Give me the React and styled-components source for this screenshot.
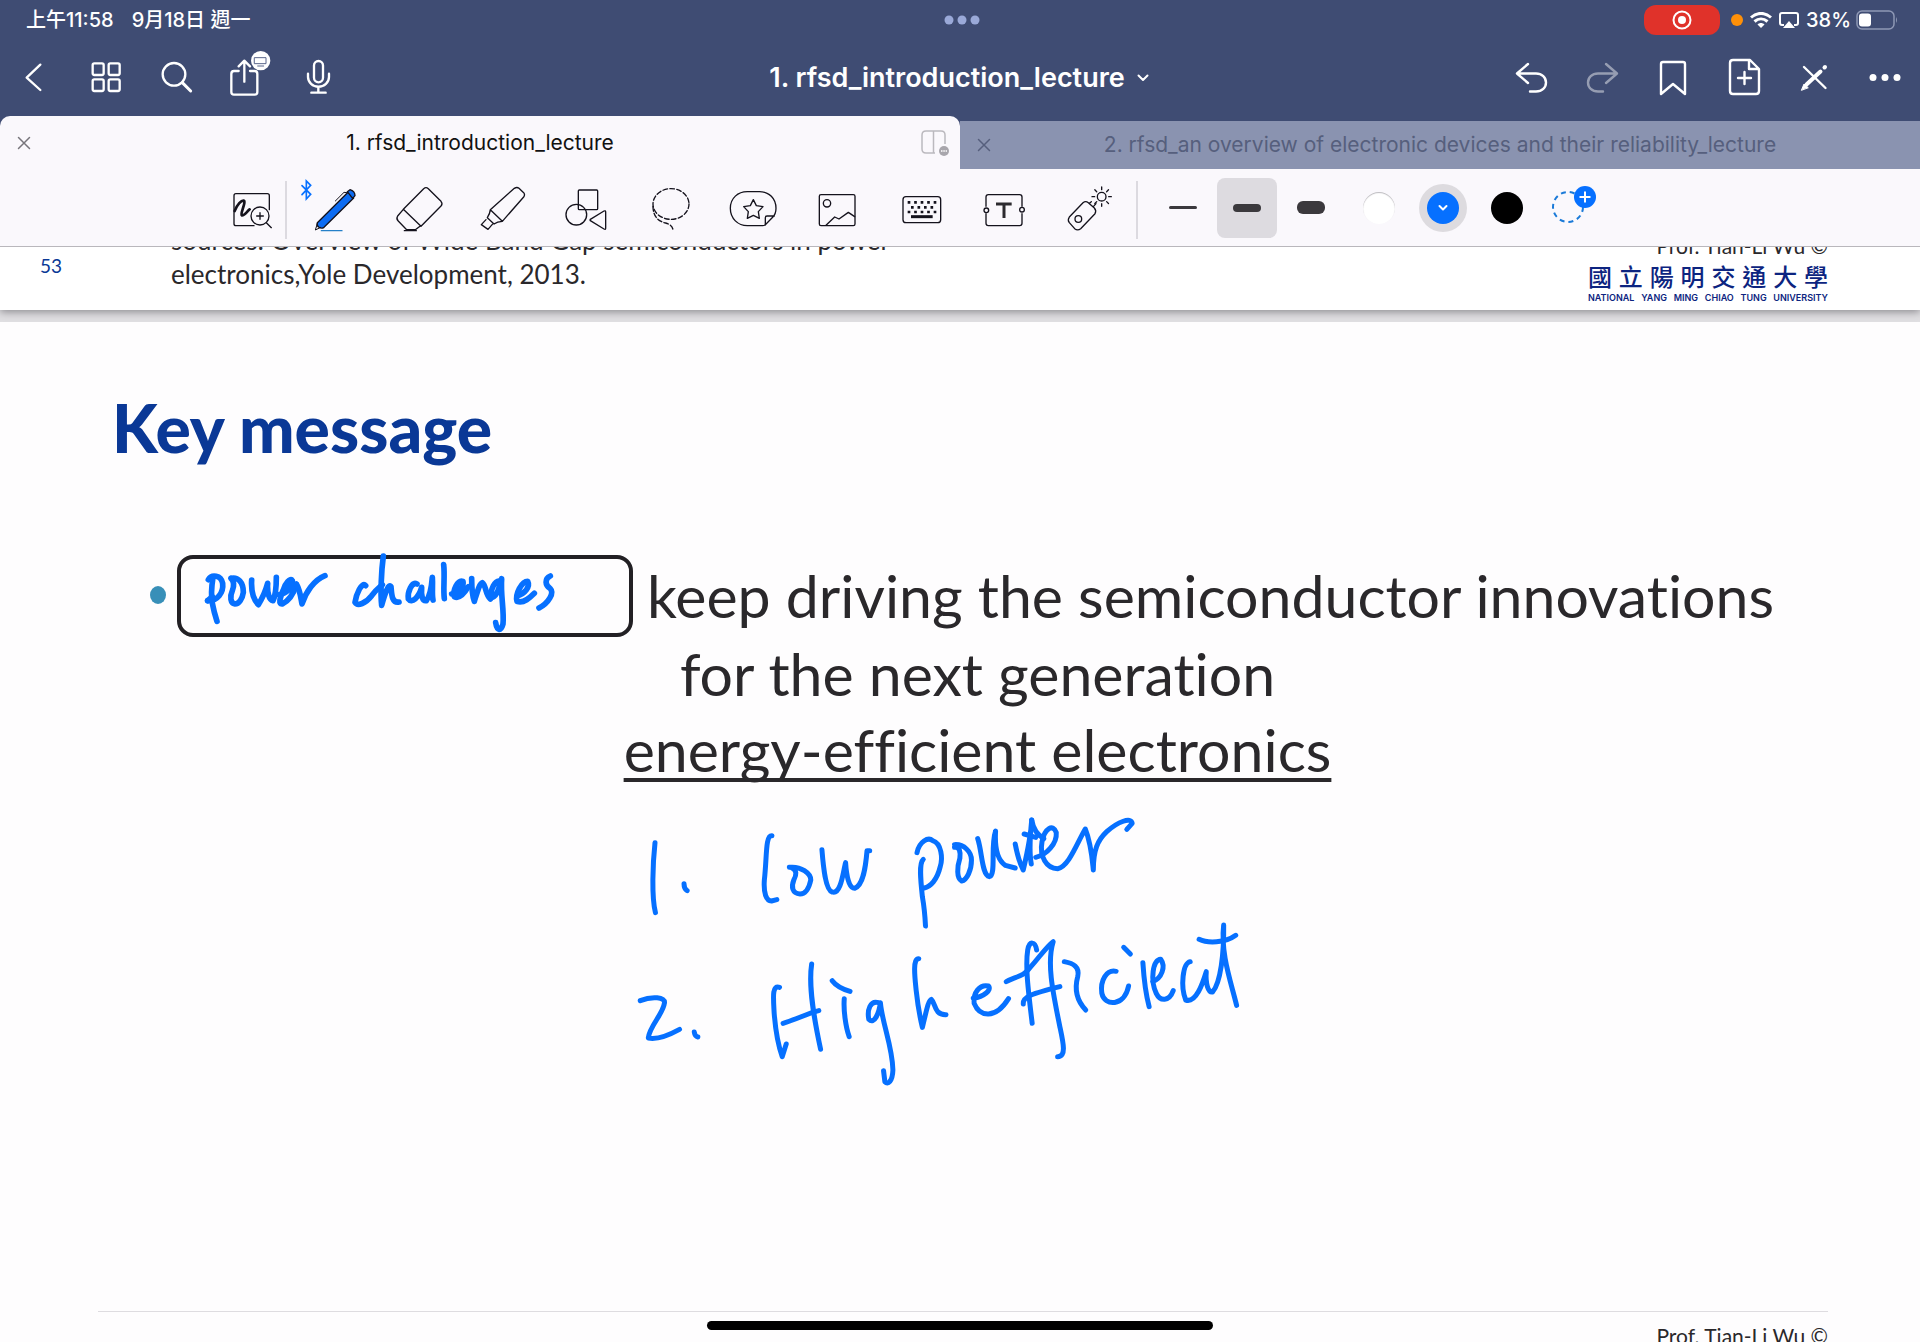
import React from "react";
import styled, { createGlobalStyle, css } from "styled-components";

const uiFont = `Inter, "Noto Sans CJK TC", "Liberation Sans", sans-serif`;
const slideFont = `Lato, "Noto Sans CJK TC", "Open Sans", sans-serif`;

const color = {
  header: "#3f4c73",
  idleTab: "#8a93b0",
  bar: "#faf8fc",
  paper: "#fefdfe",
  ink: "#0670ff",
  slideText: "#2a282b",
  navy: "#0a3896",
};

const GlobalStyle = createGlobalStyle`
  *, *::before, *::after { box-sizing: border-box; }
  body { margin: 0; overflow: hidden; background: ${color.paper}; font-family: ${uiFont}; }
  button { margin: 0; padding: 0; border: 0; background: none; color: inherit; font: inherit; cursor: pointer; }
  h1, h2, p { margin: 0; }
  svg { display: block; }
`;

const Screen = styled.div`
  position: relative;
  display: flex;
  flex-direction: column;
  height: 100vh;
  overflow: hidden;
`;

/* ---------- header ---------- */

const Header = styled.header`
  flex: none;
  background: ${color.header};
  color: #fff;
`;

const StatusBar = styled.div`
  display: grid;
  grid-template-columns: 1fr auto 1fr;
  align-items: center;
  height: 40px;
  padding: 0 22px 0 26px;
  font-size: 20px;
  font-weight: 500;
  line-height: 24px;
`;

const Clock = styled.div`
  display: flex;
  gap: 18px;
`;

const StatusRight = styled.div`
  display: flex;
  align-items: center;
  justify-content: flex-end;
  gap: 5px;
`;

const RecordPill = styled.button`
  display: flex;
  align-items: center;
  justify-content: center;
  width: 76px;
  height: 30px;
  margin-right: 6px;
  border-radius: 12px;
  background: #e0322a;
`;

const MicDot = styled.span`
  width: 12px;
  height: 12px;
  margin-right: 2px;
  border-radius: 50%;
  background: #ff9008;
`;

const NavBar = styled.nav`
  display: grid;
  grid-template-columns: 1fr auto 1fr;
  align-items: center;
  height: 76px;
  padding: 0 2px 0 0;
`;

const NavGroup = styled.div`
  display: flex;
  gap: 5px;
  justify-content: ${(p) => (p.$end ? "flex-end" : "flex-start")};
`;

const NavButton = styled.button`
  display: flex;
  justify-content: center;
  width: 66px;
  height: 54px;
  opacity: ${(p) => (p.disabled ? 0.45 : 1)};
`;

const DocTitle = styled.span`
  font-size: 27px;
  font-weight: 600;
  line-height: 32px;
`;

const TitleButton = styled.button`
  display: flex;
  align-items: center;
  gap: 12px;
`;

const Tabs = styled.div`
  display: grid;
  grid-template-columns: 1fr 1fr;
  align-items: end;
`;

const Tab = styled.div`
  display: grid;
  grid-template-columns: 48px 1fr 48px;
  align-items: center;
  height: 48px;
  background: ${color.idleTab};
  color: #565f7d;
  font-size: 21px;
  line-height: 24px;
  ${(p) =>
    p.$active &&
    css`
      height: 53px;
      border-radius: 10px 10px 0 0;
      background: ${color.bar};
      color: #111;
    `}
`;

const TabLabel = styled.button`
  overflow: hidden;
  text-align: center;
  white-space: nowrap;
`;

const TabIconButton = styled.button`
  display: flex;
  align-items: center;
  justify-content: center;
  height: 32px;
  color: ${(p) => (p.$muted ? "#77757b" : "inherit")};
`;

/* ---------- tool bar ---------- */

const ToolBar = styled.div`
  flex: none;
  display: flex;
  align-items: center;
  height: 78px;
  padding: 0 0 0 219px;
  border-bottom: 1px solid #b9b7bc;
  background: ${color.bar};
  color: #14121c;
`;

const ToolButton = styled.button`
  display: flex;
  justify-content: center;
  width: 66px;
`;

const ToolGroup = styled.div`
  display: grid;
  grid-template-columns: repeat(10, 1fr);
  justify-items: center;
  width: 837px;
  margin: 0 6px;
`;

const Divider = styled.span`
  width: 2px;
  height: 58px;
  margin-top: 4px;
  background: #dcdae0;
`;

const Options = styled.div`
  display: flex;
  gap: 4px;
  margin-left: ${(p) => (p.$tight ? 8 : 15)}px;
`;

const OptionButton = styled.button`
  display: flex;
  align-items: center;
  justify-content: center;
  width: 60px;
  height: 60px;
  border-radius: 8px;
  background: ${(p) => (p.$selected ? "#dddbe0" : "transparent")};
`;

const StrokeSample = styled.span`
  width: 28px;
  height: ${(p) => p.$weight}px;
  border-radius: 6px;
  background: #3b393d;
`;

const Swatch = styled.span`
  display: flex;
  align-items: center;
  justify-content: center;
  width: 32px;
  height: 32px;
  border-radius: 50%;
  background: ${(p) => p.$fill};
  box-shadow: ${(p) => (p.$selected ? "0 0 0 8px #dddbdf" : p.$outlined ? "inset 0 1px 1px #bbb9be" : "none")};
`;

/* ---------- slides ---------- */

const Canvas = styled.main`
  flex: 1;
  display: flex;
  flex-direction: column;
  min-height: 0;
  overflow: hidden;
  background: #e0dfe2;
  font-family: ${slideFont};
  font-variant-ligatures: none;
  color: ${color.slideText};
`;

const PreviousSlide = styled.section`
  flex: none;
  display: flex;
  align-items: flex-end;
  justify-content: space-between;
  height: 63px;
  margin-bottom: 12px;
  padding: 0 92px 0 40px;
  overflow: hidden;
  background: #fff;
  box-shadow: 0 2px 8px #8b8a8f;
`;

const SourceNote = styled.div`
  display: flex;
  align-items: flex-start;
  gap: 108px;
  padding-bottom: 19px;
`;

const PageNumber = styled.span`
  width: 23px;
  padding-top: 28px;
  color: ${color.navy};
  font-size: 19px;
  line-height: 30px;
`;

const Source = styled.p`
  font-size: 26px;
  line-height: 34px;
`;

const Credit = styled.p`
  color: ${color.slideText};
  font-size: 21px;
  line-height: 28px;
  text-align: right;
  white-space: nowrap;
`;

const University = styled.div`
  width: 240px;
  padding-bottom: 6px;
  color: #0c2480;
`;

const UniversityName = styled.p`
  font-family: "Noto Sans CJK TC", sans-serif;
  font-size: 24px;
  font-weight: 500;
  line-height: 32px;
  text-align-last: justify;
`;

const UniversityLatin = styled.p`
  font-family: ${uiFont};
  font-size: 9px;
  font-weight: 600;
  line-height: 12px;
  text-align-last: justify;
`;

const Slide = styled.section`
  flex: 1;
  display: flex;
  flex-direction: column;
  min-height: 0;
  padding: 74px 92px 0 98px;
  background: ${color.paper};
`;

const SlideTitle = styled.h2`
  padding-left: 14px;
  color: ${color.navy};
  font-size: 66px;
  font-weight: 900;
  line-height: 64px;
`;

const Message = styled.div`
  display: flex;
  align-items: flex-start;
  gap: 11px;
  padding: 96px 50px 0 52px;
`;

const Bullet = styled.span`
  flex: none;
  width: 16px;
  height: 18px;
  margin-top: 30px;
  border-radius: 50%;
  background: #388fb8;
`;

const Statement = styled.div`
  flex: 1;
  display: flex;
  flex-direction: column;
  align-items: center;
  font-size: 59px;
  line-height: 76px;
  white-space: nowrap;
`;

const FirstLine = styled.div`
  display: flex;
  align-items: center;
  gap: 14px;
  width: 100%;
  height: 80px;
`;

const Blank = styled.div`
  position: relative;
  flex: none;
  width: 456px;
  height: 82px;
  border: 4px solid #222024;
  border-radius: 16px;
`;

const BlankInk = styled.svg`
  position: absolute;
  top: -15px;
  left: 8px;
`;

const Underlined = styled.p`
  text-decoration: underline;
  text-decoration-thickness: 4px;
  text-decoration-skip-ink: none;
  text-underline-offset: 6px;
`;

const NotesInk = styled.svg`
  flex: none;
  margin: 29px 0 0 532px;
`;

const SlideFooter = styled.footer`
  flex: none;
  margin-top: auto;
  height: 31px;
  padding-top: 10px;
  border-top: 1px solid #dedce0;
  overflow: hidden;
`;

const HomeIndicator = styled.div`
  position: absolute;
  bottom: 12px;
  left: 50%;
  width: 506px;
  height: 9px;
  border-radius: 5px;
  background: #000;
  transform: translateX(-50%);
`;

/* ---------- icons ---------- */

const line = { fill: "none", stroke: "currentColor", strokeLinecap: "round", strokeLinejoin: "round" };

const NavIcon = ({ box, weight = 7, children }) => (
  <svg width="54" height="54" viewBox={box} {...line} strokeWidth={weight} aria-hidden="true">
    {children}
  </svg>
);

const ToolIcon = ({ x, children }) => (
  <svg width="60" height="60" viewBox={`${x} 23 180 180`} overflow="visible" {...line} strokeWidth="4" aria-hidden="true">
    {children}
  </svg>
);

const CloseIcon = () => (
  <svg width="14" height="14" viewBox="0 0 14 14" {...line} strokeWidth="1.5" aria-hidden="true">
    <path d="M1.5 1.5l11 11M12.5 1.5l-11 11" />
  </svg>
);

const leftNav = [
  ["Back", "18 18 162 162", <path key="a" d="M121 59L80 98l41 37" />],
  ["Thumbnails", "231 18 162 162",
    <g key="a">
      <rect x="278" y="55" width="33" height="35" rx="5" />
      <rect x="326" y="55" width="33" height="35" rx="5" />
      <rect x="278" y="103" width="33" height="35" rx="5" />
      <rect x="326" y="103" width="33" height="35" rx="5" />
    </g>],
  ["Search", "444 18 162 162",
    <g key="a"><circle cx="522" cy="88" r="34" /><path d="M547 113l25 25" strokeWidth="9" /></g>],
  ["Share", "657 18 162 162",
    <g key="a">
      <path d="M716 78h-14q-8 0-8 9v54q0 8 8 8h62q8 0 8-8V87q0-9-8-9h-14M733 110V48M716 64l17-17 17 17" />
      <circle cx="782" cy="47" r="29" fill="#fff" stroke="none" />
      <path d="M764 38h34v18h-34zM773 63h18" stroke="#59658a" strokeWidth="3" />
    </g>],
  ["Microphone", "870 18 162 162",
    <g key="a">
      <rect x="942" y="48" width="27" height="64" rx="13.5" />
      <path d="M924 86v10c0 16 14 29 31.5 29s31.5-13 31.5-29V86M955 126v16M934 143h43" />
    </g>],
];

const rightNav = [
  ["Undo", "1503 51 54 54", <path key="a" d="M1528 64l-11 9.5 11 9.5M1518 73.5h18c6 0 10 4 10 9s-4 9-10 9h-6" />],
  ["Redo", "1574 51 54 54", <path key="a" d="M1606 64l11 9.5-11 9.5M1616 73.5h-18c-6 0-10 4-10 9s4 9 10 9h5" />],
  ["Bookmark", "1645 51 54 54", <path key="a" d="M1661 94V64q0-2 2-2h20q2 0 2 2v30l-12-10z" />],
  ["Add page", "1716 51 54 54",
    <path key="a" d="M1750 60h-17q-3 0-3 3v28q0 3 3 3h23q3 0 3-3V69zM1749 60v9h9M1744.5 72v12M1738 78h13" />],
  ["Pen mode", "1787 51 54 54",
    <g key="a">
      <path d="M1804 67l21.5 21" />
      <path d="M1824.5 67.5l.5-.5M1820.500 71.500l-14 13" strokeWidth="4" />
      <path d="M1801.500 90l2.500-6 4 3.500z" fill="currentColor" strokeWidth="1" />
    </g>],
  ["More", "1858 51 54 54",
    <g key="a" fill="currentColor" stroke="none">
      <circle cx="1873" cy="77.5" r="3.5" /><circle cx="1885" cy="77.5" r="3.5" /><circle cx="1897" cy="77.5" r="3.5" />
    </g>],
];

const rays = [0, 45, 90, 135, 180, 225, 270, 315];

const tools = [
  ["Pen", 315,
    <g key="a">
      <path d="M306 46l26 26-13 14V32l13 13-26 28" stroke={color.ink} strokeWidth="5" strokeLinejoin="miter" />
      <path d="M352 157L444 66l17 17-89 88c-10 7-24-3-20-14z" fill="#0d6cf2" />
      <path d="M442 64l8-6q15 5 15 18l-7 8z" fill="#0d6cf2" />
      <path d="M406 92l26-26 8 1M352 160l-6 19 16-8" strokeWidth="3" />
      <path d="M364 181h62" stroke="#2580c8" />
    </g>],
  ["Eraser", 566,
    <g key="a">
      <path d="M609 117l61-62q7-6 14 0l38 38q6 7 0 14l-60 61zM609 117l-17 20q-5 8 1 14l26 27h26l16-12M612 181h36" />
    </g>],
  ["Highlighter", 817,
    <path key="a" d="M872 118l72-64q8-5 14 0l14 13q5 6 0 13l-64 73zM872 118q-1 12-9 24l20 19q10-8 25-8M859 148l-14 15 20 14 13-15" />],
  ["Shapes", 1068,
    <g key="a">
      <rect x="1135" y="59" width="58" height="59" rx="3" />
      <circle cx="1129" cy="133" r="31" />
      <path d="M1171 147l41-25q5-2 5 3v49q0 5-5 2l-41-25q-2-2 0-4z" />
    </g>],
  ["Lasso", -61,
    <g key="a" strokeDasharray="14 7">
      <ellipse cx="32" cy="101" rx="54" ry="46" />
      <path d="M-22 108c0 34 20 46 38 50 14 4 20 10 22 20" />
    </g>],
  ["Stickers", 190,
    <g key="a">
      <path d="M263 64h37c28 0 49 20 49 50 0 12-5 22-10 27l-22 22q-4 3-9 3h-45c-28 0-51-21-51-52s23-50 51-50zM317 164v-22q0-5 5-5h22" />
      <path d="M281 88l9 18 20 3-14 15 3 20-18-9-18 9 3-20-14-15 20-3z" />
    </g>],
  ["Image", 441,
    <g key="a">
      <rect x="478" y="73" width="107" height="93" rx="5" />
      <circle cx="501" cy="99" r="11" />
      <path d="M498 165l26-25 13 6 28-20 19 13" />
    </g>],
  ["Keyboard", 692,
    <g key="a">
      <rect x="728" y="79" width="113" height="78" rx="9" />
      <path d="M742 96h86M742 125h86" strokeWidth="8" strokeLinecap="butt" strokeDasharray="8 11.5" />
      <path d="M752 111h68" strokeWidth="8" strokeLinecap="butt" strokeDasharray="8 11.5" />
      <path d="M752 139h65" strokeWidth="9" strokeLinecap="butt" />
    </g>],
  ["Text", 943,
    <g key="a">
      <path d="M979 108V80q0-7 7-7h94q7 0 7 7v28M979 130v29q0 7 7 7h94q7 0 7-7v-29" />
      <circle cx="980" cy="120" r="7" /><circle cx="1087" cy="118" r="7" />
      <path d="M1009 101h47M1033 101v42" stroke="#2c2a2f" strokeWidth="9" strokeLinecap="butt" />
    </g>],
  ["Laser pointer", 1194,
    <g key="a">
      <path d="M1228 140l41-43q8-6 16 0l18 16q7 8 2 17l-43 45q-9 7-18 0l-16-18q-6-8 0-17zM1300 109l8-9M1289 98l5-4" />
      <circle cx="1255" cy="146" r="10" />
      <circle cx="1325" cy="79" r="13" />
      {rays.map((a) => <path key={a} d="M1325 58v-8" transform={`rotate(${a} 1325 79)`} strokeWidth="4" />)}
    </g>],
];

/* ---------- handwriting ---------- */

const blankStrokes = [
  "M58 107C68 90 96 93 101 118C104 146 85 172 56 170",
  "M72 100C68 125 65 150 70 178C74 200 79 217 84 232",
  "M56 170L70 158",
  "M126 103C147 98 163 115 163 145C160 165 150 180 138 180C124 178 122 158 130 140C136 125 135 112 126 103",
  "M188 108C186 140 192 165 208 182C222 160 230 140 236 118C234 145 240 168 252 170C262 150 262 125 262 100",
  "M270 152C292 148 312 130 310 110C304 100 288 118 282 140C272 165 268 178 280 180C300 170 315 145 322 122",
  "M322 120C334 140 336 165 339 180C350 145 375 108 408 95",
  "M530 125C518 112 502 150 498 175C506 188 530 178 548 155C562 135 572 130 580 122",
  "M583 36C577 80 574 150 578 184C590 140 600 118 606 128C608 150 608 178 630 174",
  "M684 120C668 112 655 145 658 165C668 180 690 160 698 130C696 155 700 172 712 170C724 155 728 125 730 100C732 125 728 150 732 168",
  "M764 62C768 95 762 135 766 164",
  "M788 150C808 146 826 128 822 112C806 106 790 140 796 158C812 166 828 145 838 128",
  "M848 104C848 130 850 155 856 172C866 140 872 118 880 116C892 125 888 150 904 165",
  "M934 112C918 106 902 140 908 160C922 162 932 130 938 104C934 150 946 200 942 240C936 262 924 262 920 236",
  "M984 156C1008 150 1024 128 1016 112C998 112 978 150 984 172C1004 180 1024 160 1036 148",
  "M1084 96C1066 104 1068 124 1084 134C1096 146 1080 176 1050 192",
];

const noteStrokes = [
  "M123 188C118 250 115 350 124 398",
  "M188 311C188 322 190 328 195 332",
  "M385 167C370 165 374 230 368 300C366 340 372 362 384 363L396 359",
  "M424 262C450 258 472 280 472 300C468 325 460 342 448 342C430 340 428 320 434 300C440 285 442 270 428 262",
  "M497 209C500 260 505 330 520 336C540 345 545 270 550 248C552 290 558 325 570 325C590 315 595 260 598 212L604 212",
  "M710 218C715 185 735 170 745 182C765 190 768 235 762 260C755 300 740 320 726 324",
  "M724 238C714 250 718 300 722 350C726 380 728 410 729 438",
  "M794 194C815 192 832 215 832 240C832 270 822 300 810 303C798 295 800 260 806 235C808 215 805 200 794 202",
  "M846 176C856 215 855 285 872 290C888 285 874 200 886 153C884 200 890 240 908 256L930 264",
  "M930 192C934 220 940 250 948 270C955 230 965 170 967 120C964 160 960 210 966 252",
  "M967 120C970 145 980 165 994 176M950 162L976 172",
  "M976 232C1000 225 1024 190 1022 158C1015 130 996 145 990 185C984 230 1000 265 1025 266C1050 260 1068 190 1087 147C1100 190 1102 230 1105 270C1105 210 1115 180 1135 155C1160 125 1190 110 1192 130L1180 148",
  "M90 662C115 648 148 650 144 670C142 700 110 740 108 774C130 780 155 765 178 748",
  "M211 756C212 766 215 770 219 771",
  "M402 622C385 615 388 650 390 700C393 750 400 800 408 830L417 792",
  "M410 730C440 718 465 700 490 692",
  "M474 552C466 620 480 720 494 808",
  "M520 602C530 620 545 628 560 634",
  "M547 656C545 690 550 740 558 770",
  "M624 668C605 660 598 690 602 718C614 735 625 700 628 668C632 730 655 800 656 870C655 905 645 915 638 905L635 872",
  "M714 536C700 535 705 590 708 630C712 680 718 720 722 742C730 700 735 660 742 658C752 670 748 705 775 704",
  "M836 655C860 650 878 630 870 618C850 612 835 640 838 670C850 710 885 720 915 656",
  "M978 510C975 485 962 480 958 510C952 560 960 640 968 730",
  "M910 605C930 590 950 590 965 560C985 530 1000 500 1015 485C1000 550 1015 640 1030 740C1038 790 1045 830 1025 830",
  "M948 672C946 650 970 640 1030 620",
  "M1040 545C1060 550 1075 560 1070 590C1062 630 1070 665 1088 690",
  "M1156 574C1135 568 1120 600 1124 640C1130 680 1175 680 1184 618",
  "M1173 502L1188 522",
  "M1216 548C1218 590 1224 650 1230 680",
  "M1238 605C1258 595 1268 560 1256 538C1238 540 1232 600 1246 640C1255 665 1275 665 1284 632",
  "M1322 545C1305 550 1300 620 1312 660C1335 670 1350 610 1358 575C1356 610 1362 638 1372 636C1390 610 1398 520 1397 435C1390 520 1412 600 1426 676",
  "M1342 478C1360 490 1400 490 1424 466",
];

export default function App() {
  return (
    <>
      <GlobalStyle />
      <Screen>
        <Header>
          <StatusBar>
            <Clock><span>上午11:58</span><span>9月18日 週一</span></Clock>
            <svg width="36" height="10" viewBox="0 0 36 10" fill="#9aa9d8" aria-hidden="true">
              <circle cx="5" cy="5" r="4.5" /><circle cx="18" cy="5" r="4.5" /><circle cx="31" cy="5" r="4.5" />
            </svg>
            <StatusRight>
              <RecordPill aria-label="Stop recording">
                <svg width="20" height="20" viewBox="0 0 20 20" fill="none" stroke="#fff" strokeWidth="2" aria-hidden="true">
                  <circle cx="10" cy="10" r="8.5" /><circle cx="10" cy="10" r="4" fill="#fff" stroke="none" />
                </svg>
              </RecordPill>
              <MicDot />
              <svg width="22" height="16" viewBox="0 0 22 16" fill="none" stroke="#fff" strokeWidth="3" aria-hidden="true">
                <path d="M1 5.5C7 0 15 0 21 5.5M4.5 9.5c4-3.5 9-3.5 13 0" />
                <path d="M7.5 12.5c2-2 5-2 7 0L11 16z" fill="#fff" stroke="none" />
              </svg>
              <svg width="24" height="18" viewBox="0 0 24 18" fill="none" stroke="#fff" strokeWidth="2" aria-hidden="true">
                <path d="M7 14H5q-2 0-2-2V4q0-2 2-2h14q2 0 2 2v8q0 2-2 2h-2" />
                <path d="M12 10l6 7H6z" fill="#fff" stroke="none" />
              </svg>
              <span>38%</span>
              <svg width="42" height="20" viewBox="0 0 42 20" fill="none" aria-hidden="true">
                <rect x="1" y="1" width="37" height="18" rx="5" stroke="#8e98b5" strokeWidth="1.5" />
                <rect x="3" y="3.5" width="12" height="13" rx="3" fill="#fff" />
                <path d="M40 7q2 3 0 6z" fill="#8e98b5" />
              </svg>
            </StatusRight>
          </StatusBar>
          <NavBar>
            <NavGroup>
              {leftNav.map(([label, box, art]) => (
                <NavButton key={label} aria-label={label}><NavIcon box={box}>{art}</NavIcon></NavButton>
              ))}
            </NavGroup>
            <TitleButton>
              <DocTitle>1. rfsd_introduction_lecture</DocTitle>
              <svg width="12" height="8" viewBox="0 0 12 8" {...line} strokeWidth="2" aria-hidden="true"><path d="M1.5 1.5L6 6l4.5-4.5" /></svg>
            </TitleButton>
            <NavGroup $end>
              {rightNav.map(([label, box, art]) => (
                <NavButton key={label} aria-label={label} disabled={label === "Redo"}>
                  <NavIcon box={box} weight={2.4}>{art}</NavIcon>
                </NavButton>
              ))}
            </NavGroup>
          </NavBar>
          <Tabs>
            <Tab $active>
              <TabIconButton aria-label="Close first tab" $muted><CloseIcon /></TabIconButton>
              <TabLabel>1. rfsd_introduction_lecture</TabLabel>
              <TabIconButton aria-label="Split view">
                <svg width="30" height="26" viewBox="0 0 30 26" fill="none" stroke="#bbb9be" strokeWidth="1.5" aria-hidden="true">
                  <path d="M14 23H5q-4 0-4-4V5q0-4 4-4h15q4 0 4 4v9M12.5 1v22" />
                  <circle cx="23" cy="21" r="5" fill="#a8a6ac" stroke="none" />
                  <path d="M20 21h6" stroke="#fff" strokeDasharray="1.5 .8" />
                </svg>
              </TabIconButton>
            </Tab>
            <Tab>
              <TabIconButton aria-label="Close second tab"><CloseIcon /></TabIconButton>
              <TabLabel>2. rfsd_an overview of electronic devices and their reliability_lecture</TabLabel>
            </Tab>
          </Tabs>
        </Header>

        <ToolBar role="toolbar" aria-label="Drawing tools">
          <ToolButton aria-label="Zoom window">
            <ToolIcon x={66}>
              <path d="M208 118V76q0-6-6-6h-94q-6 0-6 6v84q0 6 6 6h54" />
              <path d="M104 122c8-20 20-32 27-31 9 2-12 42-6 44 8 2 12-7 24-18" strokeWidth="8" />
              <circle cx="180" cy="137" r="27" />
              <path d="M180 127v20M170 137h20M199 157l15 15" />
            </ToolIcon>
          </ToolButton>
          <Divider />
          <ToolGroup>
            {tools.map(([label, x, art]) => (
              <ToolButton key={label} aria-label={label}><ToolIcon x={x}>{art}</ToolIcon></ToolButton>
            ))}
          </ToolGroup>
          <Divider />
          <Options>
            <OptionButton aria-label="Thin stroke"><StrokeSample $weight={3} /></OptionButton>
            <OptionButton aria-label="Medium stroke" aria-pressed="true" $selected><StrokeSample $weight={8} /></OptionButton>
            <OptionButton aria-label="Thick stroke"><StrokeSample $weight={13} /></OptionButton>
          </Options>
          <Options $tight>
            <OptionButton aria-label="White"><Swatch $fill="#fff" $outlined /></OptionButton>
            <OptionButton aria-label="Blue" aria-pressed="true">
              <Swatch $fill={color.ink} $selected>
                <svg width="10" height="8" viewBox="0 0 10 8" {...line} stroke="#fff" strokeWidth="2" aria-hidden="true"><path d="M1.5 2L5 5.5 8.5 2" /></svg>
              </Swatch>
            </OptionButton>
            <OptionButton aria-label="Black"><Swatch $fill="#000" /></OptionButton>
            <OptionButton aria-label="Add colour">
              <svg width="60" height="60" viewBox="0 0 60 60" fill="none" aria-hidden="true">
                <circle cx="27" cy="29" r="15" stroke="#1a7ad8" strokeWidth="2" strokeDasharray="5 4" />
                <circle cx="44" cy="19" r="11" fill={color.ink} />
                <path d="M38.5 19h11M44 13.5v11" stroke="#fff" strokeWidth="2" />
              </svg>
            </OptionButton>
          </Options>
        </ToolBar>

        <Canvas>
          <PreviousSlide>
            <SourceNote>
              <PageNumber>53</PageNumber>
              <Source>
                sources: Overview of Wide Band Gap semiconductors in power<br />
                electronics,Yole Development, 2013.
              </Source>
            </SourceNote>
            <University>
              <Credit>Prof. Tian-Li Wu ©</Credit>
              <UniversityName>國立陽明交通大學</UniversityName>
              <UniversityLatin>NATIONAL YANG MING CHIAO TUNG UNIVERSITY</UniversityLatin>
            </University>
          </PreviousSlide>
          <Slide>
            <SlideTitle>Key message</SlideTitle>
            <Message>
              <Bullet />
              <Statement>
                <FirstLine>
                  <Blank>
                    <BlankInk width="390" height="100" viewBox="0 0 1170 300" fill="none" stroke={color.ink} strokeWidth="17" strokeLinecap="round" strokeLinejoin="round" role="img" aria-label="Handwritten answer">
                      {blankStrokes.map((d) => <path key={d} d={d} />)}
                    </BlankInk>
                  </Blank>
                  <p>keep driving the semiconductor innovations</p>
                </FirstLine>
                <p>for the next generation</p>
                <Underlined>energy-efficient electronics</Underlined>
              </Statement>
            </Message>
            <NotesInk width="620" height="270" viewBox="67 111 1389 810" preserveAspectRatio="none" fill="none" stroke={color.ink} strokeWidth="5" strokeLinecap="round" strokeLinejoin="round" role="img" aria-label="Handwritten notes">
              {noteStrokes.map((d) => <path key={d} d={d} vectorEffect="non-scaling-stroke" />)}
            </NotesInk>
            <SlideFooter>
              <Credit>Prof. Tian-Li Wu ©</Credit>
            </SlideFooter>
          </Slide>
        </Canvas>
        <HomeIndicator />
      </Screen>
    </>
  );
}
